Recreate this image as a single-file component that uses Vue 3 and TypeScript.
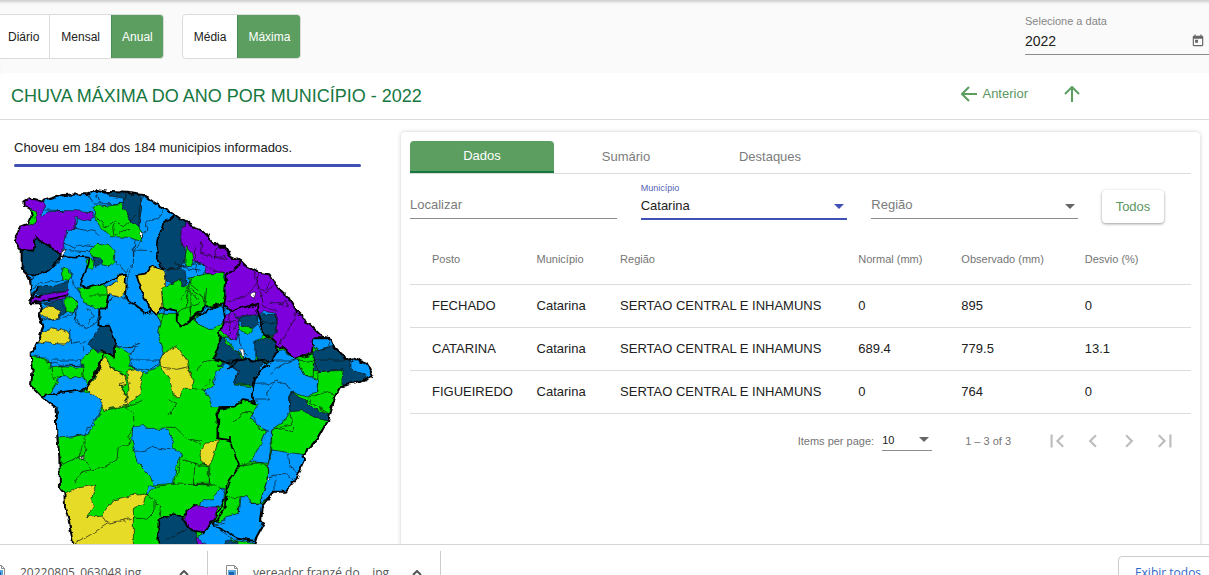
<script setup lang="ts">
import { ref } from 'vue'

type Shape = [fill: string, points: string]
interface Tile { x: number; y: number; shapes: Shape[] }
interface LineTile { x: number; y: number; bold: string[]; thin: string[] }

const period = ref('Anual')
const measure = ref('Máxima')
const tab = ref('Dados')
const year = ref('2022')
const search = ref('')
const city = ref('Catarina')
const region = ref('')
const pageSize = ref('10')

const periods = ['Diário', 'Mensal', 'Anual']
const measures = ['Média', 'Máxima']
const tabs = ['Dados', 'Sumário', 'Destaques']
const columns = ['Posto', 'Município', 'Região', 'Normal (mm)', 'Observado (mm)', 'Desvio (%)']
const rows = [
  ['FECHADO', 'Catarina', 'SERTAO CENTRAL E INHAMUNS', '0', '895', '0'],
  ['CATARINA', 'Catarina', 'SERTAO CENTRAL E INHAMUNS', '689.4', '779.5', '13.1'],
  ['FIGUEIREDO', 'Catarina', 'SERTAO CENTRAL E INHAMUNS', '0', '764', '0'],
]
const pagerIcons = [
  { label: 'First page', d: 'M18.41 16.59L13.82 12l4.59-4.59L17 6l-6 6 6 6zM6 6h2v12H6z' },
  { label: 'Previous page', d: 'M15.41 7.41L14 6l-6 6 6 6 1.41-1.41L10.83 12z' },
  { label: 'Next page', d: 'M10 6L8.59 7.41 13.17 12l-4.58 4.59L10 18l6-6z' },
  { label: 'Last page', d: 'M5.59 7.41L10.18 12l-4.59 4.59L7 18l6-6-6-6zM16 6h2v12h-2z' },
]
const downloads = ['20220805_063048.jpg', 'vereador franzé do....jpg']

const coast =
  'M70,65 85,55 130,62 190,45 265,42 285,30 320,35 380,38 430,45 470,72 525,105 570,135 605,148 635,182 655,200 675,200 690,225 720,240 740,260 775,278 808,283 835,325 865,352 890,395 930,432 970,470 990,475 1000,500 1040,540 1060,535 1100,552 1120,588 1085,605 1025,618 1005,655 985,720 955,775 908,830 915,840 890,895 855,935 820,935 785,980 780,1025 792,1030 770,1070 758,1110 222,1110 208,1030 195,980 193,940 180,925 178,830 172,770 170,685 125,648 93,615 98,570 95,520 115,480 130,440 118,395 125,370 90,370 95,345 90,300 80,280 65,265 65,210 45,185 60,140 85,130 95,108 90,85 72,78Z'

const tiles: Tile[] = [
  { x: 0, y: 0, shapes: [
    ['green', '90,530 140,535 165,560 250,562 240,548 275,510 315,515 350,500 470,560 475,400 600,400 1170,560 1170,1110 90,1110'],
    ['blue', '300,390 345,345 370,352 440,400 470,405 480,430 475,470 490,520 475,550 420,565 390,560 385,530 410,500 350,500 345,480 325,438 300,438'],
    ['violet', '65,50 130,60 133,85 120,110 150,95 180,92 222,92 275,95 282,112 275,122 245,117 225,108 225,145 200,150 195,190 185,225 150,200 108,172 100,210 85,215 65,210 30,185 60,140 85,130 108,125 100,88 72,78'],
    ['green', '88,85 105,92 110,120 98,137 70,132 88,110'],
    ['navy', '108,172 150,200 182,225 178,245 150,268 120,283 85,282 55,265 55,210 100,212'],
    ['green', '185,268 205,262 215,290 205,305 185,300'],
    ['navy', '90,345 115,322 160,318 205,305 205,330 150,340'],
    ['violet', '85,370 95,355 130,345 205,330 205,345 190,358 140,362'],
    ['navy', '125,370 190,358 195,400 180,410 170,385 150,378'],
    ['yellow', '118,390 135,378 160,380 180,395 178,412 150,418 130,412'],
    ['yellow', '110,485 130,455 155,443 185,450 210,462 210,480 195,492 150,490'],
    ['green', '195,355 215,350 230,365 225,398 195,395'],
    ['green', '232,320 260,325 310,312 330,330 325,360 320,388 290,385 250,370 245,345'],
    ['green', '282,80 365,70 372,88 395,125 420,148 430,165 425,185 385,172 330,170 300,140 285,115'],
    ['navy', '370,40 422,42 425,85 415,145 395,120 370,85'],
    ['navy', '320,30 380,35 375,55 330,48'],
    ['green', '270,215 290,190 325,193 345,215 342,245 325,260 310,258 300,235 280,228'],
    ['navy', '282,228 300,232 308,255 285,262'],
    ['green', '258,240 275,232 285,250 275,265 260,262'],
    ['yellow', '322,320 350,305 352,285 378,285 375,335 360,350 325,340'],
    ['yellow', '410,285 440,280 455,258 485,268 497,290 497,320 485,335 490,385 470,405 450,385 430,340'],
    ['navy', '490,130 530,105 575,130 540,145 545,190 560,215 555,245 540,270 495,265 470,235 475,180'],
    ['navy', '492,265 545,268 560,290 560,325 540,310 515,310 500,300'],
    ['green', '485,325 540,298 548,320 560,320 575,300 600,290 600,400 550,440 530,430 535,395 510,385 490,385'],
    ['navy', '265,490 300,440 325,438 345,480 345,530 320,520 300,510 280,510'],
    ['white', '183,238 184,218 194,210 191,233'],
    ['white', '420,158 432,158 428,172 422,168'],
  ] },
  { x: 570, y: 0, shapes: [
    ['violet', '0,125 60,150 160,230 250,270 440,470 370,475 365,520 315,535 265,495 245,470 260,460 262,400 225,395 200,405 140,408 100,370 110,340 108,285 45,280 40,250 5,245 0,215 -30,190 -30,145'],
    ['green', '-10,200 8,220 12,240 -5,265 -15,245'],
    ['blue', '-25,262 0,255 35,248 45,265 40,285 0,295 -10,285'],
    ['green', '0,295 45,282 100,280 108,300 105,340 100,372 85,385 50,380 0,420'],
    ['blue', '15,420 50,385 108,378 108,410 90,435 70,445 40,445'],
    ['violet', '95,455 105,410 125,395 145,415 150,440 140,480 118,470'],
    ['navy', '140,410 205,405 200,440 180,445 165,440'],
    ['navy', '205,405 260,402 258,460 240,470 220,460 215,430'],
    ['blue', '100,468 140,480 145,450 165,460 175,460 205,430 218,465 195,480 195,540 170,540 145,520'],
    ['navy', '85,470 100,468 105,490 140,515 155,540 120,560 75,535 85,500'],
    ['white', '145,510 162,510 162,528 155,530'],
    ['navy', '195,480 230,470 262,490 265,520 230,548 205,545 195,520'],
    ['navy', '85,555 160,535 220,550 220,590 120,590 110,565'],
    ['blue', '225,560 265,505 315,535 340,590 220,600'],
    ['green', '315,535 370,525 372,575 340,570'],
    ['blue', '370,475 415,470 417,505 385,512 370,500'],
    ['navy', '370,515 415,505 430,495 475,530 485,570 370,575'],
    ['blue', '475,525 540,545 560,575 480,572'],
    ['white', '183,345 190,336 198,338 192,355'],
  ] },
  { x: 90, y: 540, shapes: [
    ['blue', '65,0 150,0 155,18 110,15 60,25'],
    ['blue', '55,105 90,50 110,50 160,50 175,75 160,92 100,98'],
    ['blue', '25,110 100,98 165,92 200,105 222,135 205,170 175,220 130,230 70,235 70,145'],
    ['yellow', '215,0 225,-10 240,20 285,45 292,75 270,80 285,100 295,135 240,145 222,155 218,130 190,105 168,85 195,60'],
    ['yellow', '290,35 320,22 342,40 330,70 335,100 290,135 292,100 300,90'],
    ['blue', '300,0 390,0 385,20 350,38 310,25'],
    ['yellow', '392,20 390,0 400,-20 440,-43 470,0 478,30 490,55 485,85 460,85 450,110 430,110 420,60'],
    ['blue', '308,205 335,195 345,205 400,205 415,215 432,245 425,270 455,280 440,310 430,370 370,375 360,345 325,310 315,275 305,240'],
    ['yellow', '510,285 525,250 565,242 550,290 535,320 515,305'],
    ['yellow', '90,410 140,385 200,375 190,400 185,420 190,440 170,470 215,465 250,420 300,408 350,402 340,430 310,445 310,560 110,560 110,490'],
    ['blue', '345,400 360,375 375,380 355,400'],
    ['navy', '385,480 420,465 460,468 470,490 500,515 500,560 385,560'],
    ['blue', '510,425 550,415 570,385 585,385 580,430 550,445 510,445'],
    ['violet', '465,460 500,430 515,443 565,440 550,485 520,520 490,515 465,485'],
    ['blue', '505,530 550,490 600,475 600,560 520,560'],
    ['violet', '498,532 540,560 500,560'],
    ['white', '150,288 160,292 162,300 154,298'],
  ] },
  { x: 570, y: 540, shapes: [
    ['blue', '45,95 70,75 75,40 110,10 145,35 130,75 190,80 185,110 195,125 150,120 130,140 65,140 55,110'],
    ['navy', '110,0 215,0 235,15 210,45 190,75 130,72 145,35'],
    ['blue', '215,20 245,0 320,0 345,45 385,60 380,95 350,110 300,95 300,155 275,190 245,210 240,280 235,310 180,305 215,250 230,215 180,175 205,130 185,110 195,60'],
    ['navy', '300,95 345,120 370,145 420,165 420,182 370,170 335,152 300,155'],
    ['navy', '370,0 480,0 525,40 525,66 455,78 460,25 385,35'],
    ['blue', '480,5 530,0 560,48 525,55 520,42 480,25'],
    ['green', '320,0 370,5 370,50 345,45'],
    ['blue', '245,270 350,285 350,300 320,355 285,405 250,395 210,435 235,345 240,300'],
    ['blue', '150,410 175,410 180,430 215,430 225,485 225,500 200,552 130,540 70,495 105,490 110,470 145,460'],
    ['navy', '110,540 145,545 140,560 100,560'],
    ['white', '232,315 239,318 236,328'],
    ['white', '230,352 240,356 235,364'],
  ] },
]

const lineTiles: LineTile[] = [
  { x: 0, y: 0,
    bold: [
      'M85,283 120,283 150,268 185,225 194,228 270,233 260,265 240,310 260,325 310,312 350,290 378,283 375,350 440,400 450,385 430,345 410,285 440,280 455,258 490,268 470,235 475,180 490,130 525,105',
      'M328,345 318,388 298,390 298,438 327,437 345,480 345,530 310,515 300,560 272,612',
      'M450,385 470,405 490,385 530,392 530,425 545,440 600,402 655,380',
      'M108,172 185,225', 'M65,210 100,212 108,172', 'M115,322 95,355 130,345',
      'M90,370 205,345', 'M272,612 245,630 125,648', 'M300,510 345,530',
    ],
    thin: [
      'M265,42 280,72 370,70', 'M290,42 300,70', 'M190,92 133,90', 'M430,45 418,80 418,145', 'M490,90 470,115 440,125 440,150 405,210 455,212',
      'M288,110 315,140 345,125 370,140 395,118 408,108', 'M232,110 225,145 285,155 300,165', 'M195,190 225,205 235,195 280,200', 'M340,135 345,165 390,145',
      'M200,212 270,215', 'M345,240 375,275 400,248 400,205', 'M400,248 388,275 380,340', 'M405,180 400,240', 'M95,285 90,330 120,310 185,300',
      'M212,265 220,310 240,340', 'M120,420 160,418 200,410 230,390', 'M230,375 225,430 260,445 290,430 298,390', 'M260,385 280,405 265,430', 'M210,440 215,490 235,485 255,510',
      'M265,345 325,345', 'M495,385 480,440', 'M540,360 560,330 600,360', 'M550,300 600,330', 'M535,395 600,370', 'M575,300 560,345 560,390', 'M225,398 235,430', 'M520,250 560,260',
      'M105,528 185,558 250,555', 'M250,490 265,480', 'M420,490 390,500', 'M385,560 450,570 475,550', 'M505,268 550,262 600,270',
    ] },
  { x: 570, y: 0,
    bold: [
      'M150,240 135,272 110,280 105,340 100,372 125,395 150,385 205,370 205,400', 'M100,372 108,410 92,450 85,495 72,535 115,550 150,535 205,545 245,540 265,510 262,490 240,470',
      'M85,380 50,378 0,420', 'M265,495 315,535 365,525 370,475 415,475', 'M115,570 150,535', 'M205,400 215,430 220,465 240,470', 'M100,372 70,378',
    ],
    thin: [
      'M15,200 18,245 108,285', 'M35,185 32,220 110,240 105,230 70,232 85,205', 'M205,280 195,320 165,350 105,365', 'M200,320 230,330 245,285', 'M215,330 220,380 262,390',
      'M250,320 215,350', 'M240,365 295,380 290,360 262,375', 'M320,395 300,440 270,490', 'M260,400 262,460', 'M205,425 260,430', 'M105,425 145,425 130,450', 'M120,400 118,470',
      'M5,370 0,410', 'M0,325 40,350 48,378', 'M50,325 45,370', 'M85,540 40,548 20,570', 'M315,535 265,560', 'M18,250 25,290', 'M145,455 150,500 175,530', 'M190,275 215,350',
    ] },
  { x: 90, y: 540,
    bold: ['M215,0 175,75', 'M600,142 562,148 562,235 600,240', 'M600,365 580,430 550,485 520,520 490,515 460,485 460,468 420,465 385,480 385,552', 'M460,468 500,430'],
    thin: [
      'M65,15 70,55 95,50', 'M100,10 98,50', 'M155,18 160,50', 'M240,20 280,40 290,65 270,75 290,105 285,130', 'M392,20 440,28 475,20', 'M475,20 485,50', 'M420,120 440,130 420,165',
      'M205,165 165,220 165,270 155,300 175,310 185,330', 'M160,240 150,290 90,315', 'M225,150 290,140 310,165 315,200 295,220 300,245 265,265 260,300 215,325 150,335 135,370',
      'M290,140 340,120', 'M408,205 440,205 470,235 515,245', 'M310,275 350,270 370,262 425,270', 'M455,285 440,350 430,375', 'M460,300 495,310 490,370 545,375', 'M500,315 535,320 535,370',
      'M375,380 430,372 560,375', 'M345,400 375,420 375,450 350,475 310,470', 'M375,432 395,440 390,470', 'M215,465 235,490 180,525 135,550', 'M235,490 305,475', 'M410,540 470,505',
      'M485,85 520,90 530,100', 'M545,60 520,80', 'M130,230 155,222',
    ] },
  { x: 570, y: 540,
    bold: [
      'M220,10 235,15 195,50 190,85 185,110 200,130 160,120 130,140 85,142 85,235 120,240 125,260 148,315 110,370 108,440 70,495',
      'M70,495 110,515 140,535 190,545', 'M120,228 120,240', 'M525,66 550,48',
    ],
    thin: [
      'M180,305 148,315 215,308 235,320 235,345 210,430 180,430', 'M123,185 150,175 160,155 180,155 215,215 235,210', 'M195,70 240,68 265,60 300,85', 'M250,68 230,100 235,120 190,120',
      'M300,160 305,195 245,208', 'M260,205 310,215 315,200', 'M245,208 245,270 235,305', 'M295,280 300,320 320,335', 'M240,350 270,340 320,355', 'M255,355 255,390', 'M350,115 412,95 440,110',
      'M385,35 380,95', 'M350,120 415,160', 'M110,405 125,415 150,410', 'M145,460 145,430', 'M0,240 30,255', 'M60,320 55,370 10,370', 'M240,40 280,15', 'M300,95 298,150', 'M80,440 110,440', 'M0,310 60,315', 'M110,400 85,380',
    ] },
]
</script>

<template>
  <div class="page">
    <header class="toolbar">
      <div class="toggle first" role="group" aria-label="Período">
        <button v-for="p in periods" :key="p" type="button" :class="{ on: p === period }" @click="period = p">{{ p }}</button>
      </div>
      <div class="toggle" role="group" aria-label="Medida">
        <button v-for="m in measures" :key="m" type="button" :class="{ on: m === measure }" @click="measure = m">{{ m }}</button>
      </div>
      <div class="date">
        <label for="date">Selecione a data</label>
        <div class="date-line">
          <input id="date" v-model="year" type="text">
          <button type="button" aria-label="Abrir calendário">
            <svg viewBox="0 0 24 24"><path d="M19 3h-1V1h-2v2H8V1H6v2H5c-1.1 0-2 .9-2 2v14c0 1.1.9 2 2 2h14c1.1 0 2-.9 2-2V5c0-1.1-.9-2-2-2zm0 16H5V8h14v11zM7 10h5v5H7z" /></svg>
          </button>
        </div>
      </div>
    </header>

    <main>
      <div class="heading">
        <h1>CHUVA MÁXIMA DO ANO POR MUNICÍPIO - 2022</h1>
        <nav>
          <a href="#anterior"><svg viewBox="0 0 16 16"><path d="M16 8H2M8 1L1 8l7 7" /></svg>Anterior</a>
          <a href="#topo" aria-label="Subir"><svg viewBox="0 0 16 16"><path d="M8 16V2M1 8l7-7 7 7" /></svg></a>
        </nav>
      </div>

      <div class="body">
        <section class="summary">
          <p>Choveu em 184 dos 184 municipios informados.</p>
          <div class="meter"></div>
          <svg class="map" viewBox="0 24 1200 1086" role="img" aria-label="Mapa de chuva por município">
            <defs>
              <clipPath id="land"><path :d="coast" /></clipPath>
              <filter id="rough" x="-2%" y="-2%" width="104%" height="104%" color-interpolation-filters="sRGB">
                <feTurbulence type="fractalNoise" baseFrequency="0.045" numOctaves="2" seed="4" result="noise" />
                <feDisplacementMap in="SourceGraphic" in2="noise" scale="17" xChannelSelector="R" yChannelSelector="G" />
              </filter>
            </defs>
            <g filter="url(#rough)">
              <g clip-path="url(#land)">
                <path class="blue" :d="coast" />
                <g v-for="(t, i) in tiles" :key="i" :transform="`translate(${t.x} ${t.y})`">
                  <polygon v-for="(s, j) in t.shapes" :key="j" class="area" :class="s[0]" :points="s[1]" />
                </g>
                <g v-for="(t, i) in lineTiles" :key="i" :transform="`translate(${t.x} ${t.y})`">
                  <path v-for="(d, j) in t.thin" :key="`t${j}`" class="thin" :d="d" />
                  <path v-for="(d, j) in t.bold" :key="`b${j}`" class="bold" :d="d" />
                </g>
              </g>
              <path class="coast" :d="coast" />
            </g>
          </svg>
        </section>

        <section class="card">
          <div class="tabs" role="tablist">
            <button v-for="t in tabs" :key="t" type="button" role="tab" :aria-selected="t === tab" :class="{ on: t === tab }" @click="tab = t">{{ t }}</button>
          </div>

          <div class="filters">
            <div class="field">
              <input v-model="search" type="text" placeholder="Localizar" aria-label="Localizar">
            </div>
            <div class="field active">
              <label for="city">Município</label>
              <select id="city" v-model="city"><option>Catarina</option></select>
              <svg class="caret" viewBox="0 0 10 5"><path d="M0 0h10L5 5z" /></svg>
            </div>
            <div class="field">
              <select v-model="region" aria-label="Região" :class="{ empty: !region }"><option value="">Região</option></select>
              <svg class="caret" viewBox="0 0 10 5"><path d="M0 0h10L5 5z" /></svg>
            </div>
            <button class="all" type="button">Todos</button>
          </div>

          <table>
            <colgroup><col v-for="(c, i) in columns" :key="c" :class="`c${i}`"></colgroup>
            <thead><tr><th v-for="c in columns" :key="c" scope="col">{{ c }}</th></tr></thead>
            <tbody>
              <tr v-for="r in rows" :key="r[0]"><td v-for="(v, i) in r" :key="i">{{ v }}</td></tr>
            </tbody>
          </table>

          <div class="pager">
            <label for="size">Items per page:</label>
            <div class="size">
              <select id="size" v-model="pageSize"><option>10</option></select>
              <svg class="caret" viewBox="0 0 10 5"><path d="M0 0h10L5 5z" /></svg>
            </div>
            <span class="range">1 – 3 of 3</span>
            <button v-for="p in pagerIcons" :key="p.label" type="button" disabled :aria-label="p.label">
              <svg viewBox="0 0 24 24"><path :d="p.d" /></svg>
            </button>
          </div>
        </section>
      </div>
    </main>

    <footer>
      <div v-for="d in downloads" :key="d" class="download">
        <svg class="file" viewBox="0 0 12 16">
          <path d="M.5.5h8l3 3v12H.5z" fill="#fff" stroke="#8a8a8a" />
          <path d="M8.500.5v3h3" fill="none" stroke="#8a8a8a" />
          <path d="M2 5h8v8H2z" fill="#5aa7e0" /><path d="M3 7h5v4H3z" fill="#1565b5" />
        </svg>
        <span>{{ d }}</span>
        <button type="button" aria-label="Opções"><svg viewBox="0 0 10 6"><path d="M1 5l4-4 4 4" /></svg></button>
      </div>
      <button class="show-all" type="button">Exibir todos</button>
    </footer>
  </div>
</template>

<style>
body { margin: 0; }
</style>

<style scoped>
* { box-sizing: border-box; }
.page { display: flex; flex-direction: column; height: 100vh; overflow: hidden; background: #fafafa; color: #212121; font: 13px/20px "Liberation Sans", Arial, sans-serif; }
button, input, select { font: inherit; color: inherit; margin: 0; padding: 0; border: 0; background: none; border-radius: 0; outline: 0; }
select { appearance: none; width: 100%; }
input { width: 100%; min-width: 0; }

.toolbar { flex: none; display: flex; align-items: flex-start; gap: 18px; height: 73px; padding-top: 14px; box-shadow: inset 0 4px 3px -2px #ccc; }
.toggle { display: flex; height: 45px; border: 1px solid #dcdcdc; border-radius: 4px; overflow: hidden; background: #fff; font-size: 12px; }
.toggle button { padding: 0 11px; }
.toggle button + button { border-left: 1px solid #dcdcdc; }
.toggle .on, .toggle button + .on { background: #5c9d60; border-color: #4b8c50; color: #fff; padding: 0 10px; }
.toggle.first { border-left: 0; border-radius: 0 4px 4px 0; }
.toggle.first button:first-child { padding-left: 8px; padding-right: 10px; }
.date { width: 184px; margin-left: auto; }
.date label { display: block; font-size: 11px; line-height: 14px; color: #868686; }
.date-line { display: flex; align-items: center; height: 27px; border-bottom: 1px solid #8c8c8c; font-size: 14px; }
.date-line button { flex: none; height: 14px; margin-right: 4px; }
.date svg { display: block; width: 14px; height: 14px; fill: #666; }

main { flex: 1; min-height: 0; overflow: hidden; background: #fff; border-radius: 4px 4px 0 0; }
.heading { display: flex; align-items: center; justify-content: space-between; height: 47px; padding: 0 129px 0 11px; border-bottom: 1px solid #dcdcdc; }
h1 { margin: 0; font-size: 18px; font-weight: 400; line-height: 24px; color: #16773f; }
nav { display: flex; gap: 36px; margin-top: -4px; }
a { display: flex; align-items: center; gap: 5px; color: #5c9660; text-decoration: none; }
a svg { width: 16px; height: 16px; fill: none; stroke: #5c9d60; stroke-width: 2; }
.body { display: grid; grid-template-columns: minmax(0, 1fr) minmax(0, 2fr); padding: 12px 9px 0 0; }
.summary { padding-top: 6px; }
.summary p { margin: 0 14px; }
.meter { height: 3px; margin: 6px 39px 0 14px; border-radius: 2px; background: #3f51b5; }
.map { display: block; width: 100%; margin-top: 21px; }
.area { stroke: #111; stroke-width: 2; }
.green { fill: #00df00; }
.blue { fill: #0099ff; }
.navy { fill: #00466e; }
.violet { fill: #7d00dc; }
.yellow { fill: #e6dc28; }
.white { fill: #fff; }
.thin { fill: none; stroke: #111; stroke-width: 2; }
.bold { fill: none; stroke: #000; stroke-width: 5; stroke-linejoin: round; }
.coast { fill: none; stroke: #000; stroke-width: 6; stroke-linejoin: round; }

.card { min-height: 480px; margin-left: 1px; padding: 9px; border-radius: 4px; box-shadow: 0 0 4px rgba(0, 0, 0, .2); }
.tabs { display: flex; height: 33px; border-bottom: 1px solid #dcdcdc; }
.tabs button { width: 144px; color: #7b7b7b; }
.tabs .on { background: #5c9d60; color: #fff; border-radius: 4px 4px 0 0; border-bottom: 2px solid #16773f; }
.filters { display: grid; grid-template-columns: repeat(3, minmax(0, 1fr)) 62px; gap: 24px; align-items: end; height: 45px; padding-right: 27px; }
.field { position: relative; height: 37px; padding-top: 13px; border-bottom: 1px solid #8c8c8c; }
.field input, .field select { display: block; height: 20px; }
.field input::placeholder, .field .empty { color: #7b7b7b; opacity: 1; }
.field.active { height: 38px; padding-top: 14px; margin-bottom: -1px; border-bottom: 2px solid #3f51b5; }
.field label { position: absolute; top: 0; left: 0; font-size: 9px; line-height: 12px; color: #5361b8; }
.caret { position: absolute; right: 3px; top: 22px; width: 10px; height: 5px; fill: #666; pointer-events: none; }
.active .caret { fill: #3f51b5; }
.all { height: 33px; margin-bottom: -4px; border-radius: 4px; background: #fff; color: #5c9660; box-shadow: 0 1px 3px rgba(0, 0, 0, .4); }

table { width: 100%; margin-top: 9px; border-collapse: collapse; table-layout: fixed; }
th, td { padding: 0; text-align: left; white-space: nowrap; border-bottom: 1px solid #dcdcdc; }
th { height: 56px; padding-top: 6px; font-size: 11px; font-weight: 400; color: #757575; }
td { height: 43px; }
th:first-child, td:first-child { padding-left: 22px; }
.c0 { width: 16.2%; }
.c1 { width: 10.7%; }
.c2 { width: 30.5%; }
.c3 { width: 13.2%; }
.c4 { width: 15.8%; }
.c5 { width: 13.6%; }

.pager { display: flex; align-items: center; justify-content: flex-end; height: 54px; padding-right: 8px; font-size: 11px; color: #757575; }
.size { position: relative; width: 50px; margin: 0 33px 0 8px; border-bottom: 1px solid #8c8c8c; color: #212121; }
.size select { display: block; height: 20px; }
.size .caret { top: 7px; }
.range { margin-right: 28px; }
.pager button { width: 36px; height: 36px; }
.pager button svg { display: block; width: 26px; height: 26px; margin: 0 auto; fill: #bdbdbd; }

footer { flex: 0 0 31px; display: flex; align-items: flex-start; border-top: 1px solid #d5d5d5; background: #fff; overflow: hidden; font: 12px/16px "Open Sans", "Noto Sans", sans-serif; color: #555; }
.download { display: flex; align-items: center; width: 233px; height: 44px; margin-top: 6px; border-right: 1px solid #ccc; }
.download:first-child { width: 208px; }
.download .file { width: 12px; height: 16px; margin: 0 15px 0 18px; }
.download:first-child .file { margin-left: -7px; }
.download span { flex: 1; white-space: nowrap; }
.download button { width: 10px; margin-right: 18px; }
.download button svg { display: block; width: 10px; height: 6px; fill: none; stroke: #555; stroke-width: 2; }
.show-all { flex: none; width: 100px; height: 34px; margin: 11px -9px 0 auto; border: 1px solid #ccc; border-radius: 4px; color: #2f66c8; }
</style>
